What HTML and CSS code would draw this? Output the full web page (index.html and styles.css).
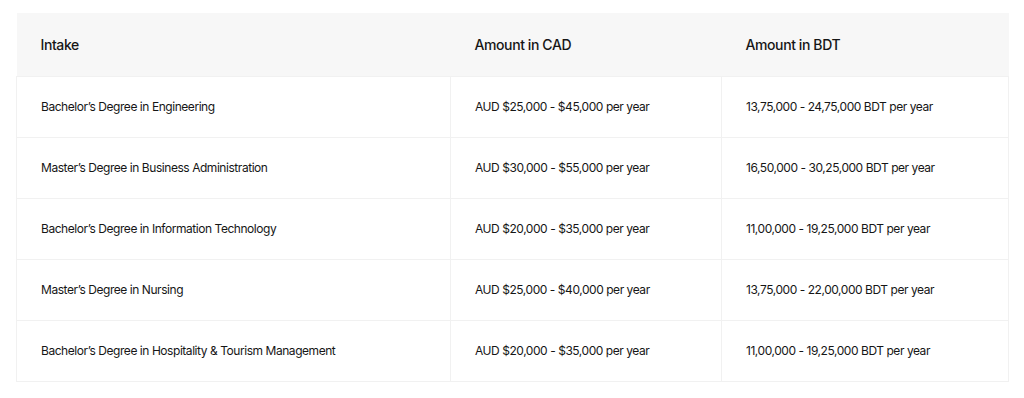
FILE: index.html
```html
<!DOCTYPE html>
<html>
<head>
<meta charset="utf-8">
<link rel="stylesheet" href="styles.css">
</head>
<body>
<div class="wrap">
<table class="fees">
  <colgroup>
    <col class="c1"><col class="c2"><col class="c3">
  </colgroup>
  <thead>
    <tr><th>Intake</th><th>Amount in CAD</th><th>Amount in BDT</th></tr>
  </thead>
  <tbody>
    <tr><td>Bachelor’s Degree in Engineering</td><td>AUD $25,000 - $45,000 per year</td><td>13,75,000 - 24,75,000 BDT per year</td></tr>
    <tr><td>Master’s Degree in Business Administration</td><td>AUD $30,000 - $55,000 per year</td><td>16,50,000 - 30,25,000 BDT per year</td></tr>
    <tr><td>Bachelor’s Degree in Information Technology</td><td>AUD $20,000 - $35,000 per year</td><td>11,00,000 - 19,25,000 BDT per year</td></tr>
    <tr><td>Master’s Degree in Nursing</td><td>AUD $25,000 - $40,000 per year</td><td>13,75,000 - 22,00,000 BDT per year</td></tr>
    <tr><td>Bachelor’s Degree in Hospitality &amp; Tourism Management</td><td>AUD $20,000 - $35,000 per year</td><td>11,00,000 - 19,25,000 BDT per year</td></tr>
  </tbody>
</table>
</div>
</body>
</html>
```
FILE: styles.css
```css
html, body {
  margin: 0;
  padding: 0;
  background: #ffffff;
}
.wrap {
  padding: 13px 16px 0 16px;
}
.fees {
  width: 992px;
  border-collapse: collapse;
  table-layout: fixed;
  font-family: Inter, "Liberation Sans", sans-serif;
  color: #161616;
  font-variant-numeric: proportional-nums;
}
.c1 { width: 434px; }
.c2 { width: 271px; }
.c3 { width: 287px; }
.fees th {
  background: #f7f7f7;
  height: 63px;
  padding: 0 0 0 24px;
  text-align: left;
  font-weight: 500;
  font-size: 14px;
  letter-spacing: -0.4px;
  box-sizing: border-box;
}
.fees td {
  height: 61px;
  padding: 0 0 0 24px;
  font-size: 12px;
  letter-spacing: -0.45px;
  border: 1px solid #f1f1f1;
  box-sizing: border-box;
}
```
